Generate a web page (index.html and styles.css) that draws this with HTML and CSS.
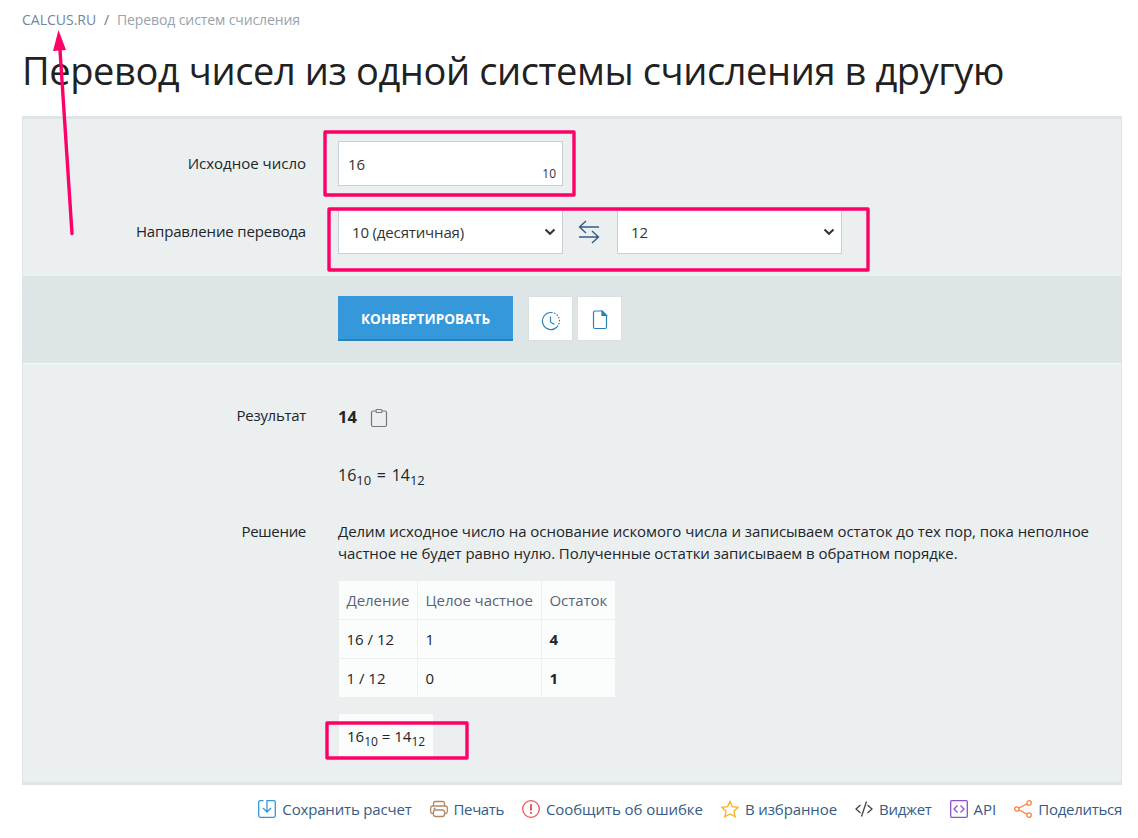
FILE: index.html
```html
<!DOCTYPE html>
<html lang="ru">
<head>
<meta charset="utf-8">
<title>Перевод чисел из одной системы счисления в другую</title>
<link rel="stylesheet" href="styles.css">
</head>
<body>
<main class="page">
  <nav class="crumbs"><a class="crumb-home">CALCUS.RU</a><span class="crumb-sep">/</span><span class="crumb-current">Перевод систем счисления</span></nav>
  <h1 class="title"><span>Перевод чисел из одной системы счисления в другую</span></h1>

  <section class="panel">
    <div class="form">
      <div class="row">
        <div class="label">Исходное число</div>
        <div class="field number-field"><span>16</span><span class="base">10</span></div>
      </div>
      <div class="row">
        <div class="label label-direction">Направление перевода</div>
        <div class="direction">
          <div class="field select"><span class="select-text">10 (десятичная)</span><svg class="chevron" viewBox="0 0 12 8"><path d="M1.5 1.5 6 5.8 10.5 1.5"/></svg></div>
          <svg class="swap" viewBox="0 0 22 24"><path d="M21 7H1.500M8 1 1.500 7 8 13M1 17H20.500M14 11 20.500 17 14 23"/></svg>
          <div class="field select"><span>12</span><svg class="chevron" viewBox="0 0 12 8"><path d="M1.5 1.5 6 5.8 10.5 1.5"/></svg></div>
        </div>
      </div>
    </div>

    <div class="actions">
      <div class="convert"><span>КОНВЕРТИРОВАТЬ</span></div>
      <div class="tool"><svg class="tool-icon" viewBox="0 0 20 20"><path d="M10 1.500a8.500 8.500 0 1 0 6 14.500"/><path stroke-dasharray="1.6 1.4" d="M10 1.500a8.500 8.500 0 0 1 6 14.500"/><path d="M9.500 5.500V11l4 2.500"/></svg></div>
      <div class="tool"><svg class="tool-icon tool-doc" viewBox="0 0 20 20"><path d="M12 1H5Q3.500 1 3.500 2.500V17Q3.500 18.500 5 18.500H15Q16.500 18.500 16.500 17V5.500Z"/><path class="fold" d="M12 1V5.500H16.500Z"/></svg></div>
    </div>

    <div class="results">
      <div class="row result-row">
        <div class="label label-result">Результат</div>
        <div class="answer"><b>14</b><svg class="clipboard" viewBox="0 0 18 20"><path d="M5.500 3H3Q1.500 3 1.500 4.500V17Q1.500 18.500 3 18.500H15Q16.500 18.500 16.500 17V4.500Q16.500 3 15 3H12.500"/><rect x="6" y="1.500" width="6" height="3" rx="1"/></svg></div>
      </div>
      <div class="equation">16<sub>10</sub> = 14<sub>12</sub></div>
      <div class="row solution-row">
        <div class="label label-solution">Решение</div>
        <div class="solution">
          <p class="explain"><span class="line-one">Делим исходное число на основание искомого числа и записываем остаток до тех пор, пока неполное</span><br><span class="line-two">частное не будет равно нулю. Полученные остатки записываем в обратном порядке.</span></p>
          <div class="table">
            <div class="cell head">Деление</div><div class="cell head head-whole">Целое частное</div><div class="cell head">Остаток</div>
            <div class="cell">16 / 12</div><div class="cell">1</div><div class="cell"><b>4</b></div>
            <div class="cell">1 / 12</div><div class="cell">0</div><div class="cell"><b>1</b></div>
          </div>
          <div class="final">16<sub>10</sub> = 14<sub>12</sub></div>
        </div>
      </div>
    </div>
  </section>

  <footer class="links">
    <a class="link link-save"><svg class="icon save" viewBox="0 0 18 18"><path d="M5.500 .7H2.200Q.7.700.7 2.200V15.800Q.7 17.300 2.200 17.300H15.800Q17.300 17.300 17.300 15.800V2.200Q17.300.7 15.800.7H9V11.500M5 8l4 4 4-4"/></svg><span>Сохранить расчет</span></a>
    <a class="link link-print"><svg class="icon print" viewBox="0 0 18 18"><path d="M3.500 6V3.500Q3.500 1.500 5.500 1.500H12.500Q14.500 1.500 14.500 3.500V6M3.500 13.500H2.500Q.7 13.500.7 11.700V8Q.7 6 2.700 6H15.300Q17.300 6 17.300 8V11.700Q17.300 13.500 15.500 13.500H14.500M3.500 8.500H5.500M5.500 10H12.500Q14.500 10 14.500 12V14.500Q14.500 16.500 12.500 16.500H5.500Q3.500 16.500 3.500 14.500V12Q3.500 10 5.500 10Z"/></svg><span>Печать</span></a>
    <a class="link link-error"><svg class="icon error" viewBox="0 0 18 18"><circle cx="9" cy="9" r="8.300"/><path class="mark" d="M9 4.300V10.500M9 12V13.800"/></svg><span>Сообщить об ошибке</span></a>
    <a class="link link-star"><svg class="icon star" viewBox="0 0 18 18"><path d="M9 1.500 11.400 6.600 17.200 7.300 13 11.100 14.100 16.800 9 14 3.900 16.800 5 11.100.8 7.300 6.600 6.600Z"/></svg><span>В избранное</span></a>
    <a class="link link-widget"><svg class="icon widget" viewBox="0 0 18 18"><path d="M5.500 5 1 9 5.500 13M12.500 5 17 9 12.500 13M11.500 1.500 6.500 16.500"/></svg><span>Виджет</span></a>
    <a class="link link-api"><svg class="icon api" viewBox="0 0 18 18"><rect x=".7" y=".7" width="16.600" height="16.600" rx="1"/><path d="M7.500 5.500 4 9 7.500 12.500M10.500 5.500 14 9 10.500 12.500"/></svg><span>API</span></a>
    <a class="link link-share"><svg class="icon share" viewBox="0 0 18 18"><circle cx="2.900" cy="9" r="2.200"/><circle cx="15.100" cy="2.900" r="2.200"/><circle cx="15.100" cy="15.100" r="2.200"/><path d="M5 8 13 3.900M5 10 13 14.100"/></svg><span>Поделиться</span></a>
  </footer>

  <svg class="notes" viewBox="0 0 1138 838">
    <path d="M72 233.500 60 50"/>
    <path class="arrow-head" d="M58.500 30 66 50 53 51Z"/>
    <rect x="325" y="132" width="249" height="63"/>
    <rect x="329" y="209" width="539" height="61"/>
    <rect x="327" y="723" width="140" height="35"/>
  </svg>
</main>
</body>
</html>
```
FILE: styles.css
```css
* { box-sizing: border-box; }
body { margin: 0; background: #fff; color: #212529; font-family: "Open Sans", "Noto Sans", sans-serif; font-size: 15px; line-height: 22px; white-space: nowrap; }
svg { display: block; flex: none; fill: none; stroke: currentColor; }
b { font-weight: 700; }
.page { position: relative; width: 1138px; height: 838px; overflow: hidden; padding: 9px 16px 0 22px; }
.crumbs { display: flex; height: 22px; font-size: 14px; color: #6c757d; }
.crumb-home { width: 82px; color: #71869b; }
.crumb-sep { width: 13px; }
.crumb-current { color: #98a2ac; letter-spacing: -.11px; }
.title { margin: 0; height: 85px; padding-top: 14px; font-size: 38px; line-height: 50px; font-weight: 400; letter-spacing: -.4px; color: #212121; }
.panel { height: 669px; background: #ebeff0; border: 1px solid #dde5e6; border-width: 3px 1px; }
.form { display: flex; flex-direction: column; gap: 23px; height: 157px; padding-top: 22px; }
.row { display: flex; gap: 32px; }
.form .row { height: 45px; line-height: 45px; }
.label { width: 283px; text-align: right; }
.label-direction { letter-spacing: -.15px; }
.label-result, .label-solution { letter-spacing: -.3px; }
.field { width: 225px; height: 45px; display: flex; justify-content: space-between; background: #fff; border: 1px solid #c9cfd6; color: #333; padding: 0 6px 0 9px; }
.base { font-size: 12px; line-height: 63px; }
.direction { display: flex; }
.select { padding: 0 6px 0 13px; }
.select-text { letter-spacing: -.15px; }
.chevron { width: 12px; height: 8px; margin-top: 18px; stroke: #333; stroke-width: 2; }
.swap { width: 22px; height: 24px; margin: 11px 17px 0 15px; color: #355b84; stroke-width: 1.4; }
.actions { display: flex; height: 88px; padding: 20px 0 0 315px; background: #dde5e6; border-bottom: 1px solid #f7f9f9; }
.convert { width: 175px; height: 45px; margin-right: 15px; background: #3498db; border-bottom: 2px solid #2980b9; color: #fff; text-align: center; font-size: 13.6px; line-height: 46px; font-weight: 700; }
.tool { display: flex; width: 45px; height: 45px; margin-right: 4px; background: #fff; border: 1px solid #dadfe0; color: #2980b9; padding: 14px 0 0 12px; }
.tool-icon { width: 20px; height: 20px; stroke-width: 1.2; }
.tool-doc { margin-top: -1px; }
.fold { fill: currentColor; }
.results { padding-top: 40px; }
.result-row { height: 60px; }
.answer { display: flex; gap: 13px; padding-top: 2px; font-size: 16.5px; }
.clipboard { width: 18px; height: 20px; margin-top: 2px; color: #777; stroke-width: 1.2; }
.equation { height: 56px; padding-left: 315px; font-size: 16px; word-spacing: 1.5px; }
.equation sub { font-size: 13px; }
sub { font-size: 12px; line-height: 0; vertical-align: -4px; }
.explain { margin: 0; height: 61px; }
.line-one { letter-spacing: -.06px; }
.line-two { letter-spacing: -.08px; }
.table { display: grid; width: 277px; grid-template-columns: 78px 123px 73px; gap: 1px; padding-left: 1px; }
.cell { height: 38px; padding: 0 7.5px; line-height: 39px; background: #fbfdfd; }
.head { color: #5b6376; letter-spacing: -.05px; }
.final { width: 94px; height: 43px; margin: 17px 0 0 1px; padding-left: 8px; line-height: 44px; background: #fbfdfd; }
.links { display: flex; gap: 18px; padding-top: 13px; justify-content: flex-end; color: #355b84; }
.link { display: flex; gap: 6px; }
.link-save { letter-spacing: -.17px; }
.link-print { letter-spacing: -.4px; }
.link-error { letter-spacing: -.06px; }
.link-star { letter-spacing: -.1px; }
.link-widget { letter-spacing: -.3px; }
.link-share { letter-spacing: -.28px; }
.icon { width: 18px; height: 18px; margin-top: 2px; stroke-width: 1.3; }
.save { color: #3498db; }
.print { color: #b08968; }
.error { color: #ed5555; }
.mark { stroke-width: 2; }
.star { color: #f9b126; }
.widget { color: #444; }
.api { color: #8e4fd0; }
.share { color: #ff8040; }
.notes { position: absolute; left: 0; top: 0; width: 1138px; height: 838px; color: #ff0068; stroke-width: 3.4; stroke-linejoin: round; stroke-linecap: round; pointer-events: none; }
.arrow-head { fill: currentColor; stroke-width: 0; }
```
